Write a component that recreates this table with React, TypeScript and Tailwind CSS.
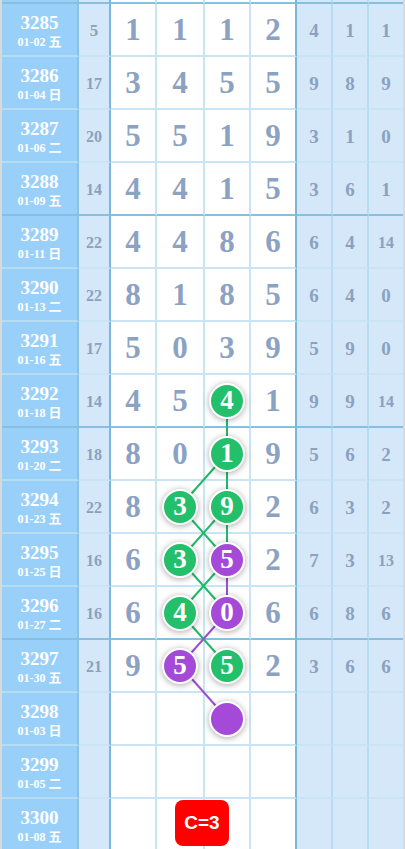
import React from "react";

type Ball = { v: string; c: "g" | "p" };
type Row = {
  n: string;
  d: string;
  s?: string;
  digits?: string[];
  r?: string[];
  balls?: Record<number, Ball>;
  badge?: boolean;
};

const rows: Row[] = [
  { n: "3285", d: "01-02 五", s: "5", digits: ["1", "1", "1", "2"], r: ["4", "1", "1"] },
  { n: "3286", d: "01-04 日", s: "17", digits: ["3", "4", "5", "5"], r: ["9", "8", "9"] },
  { n: "3287", d: "01-06 二", s: "20", digits: ["5", "5", "1", "9"], r: ["3", "1", "0"] },
  { n: "3288", d: "01-09 五", s: "14", digits: ["4", "4", "1", "5"], r: ["3", "6", "1"] },
  { n: "3289", d: "01-11 日", s: "22", digits: ["4", "4", "8", "6"], r: ["6", "4", "14"] },
  { n: "3290", d: "01-13 二", s: "22", digits: ["8", "1", "8", "5"], r: ["6", "4", "0"] },
  { n: "3291", d: "01-16 五", s: "17", digits: ["5", "0", "3", "9"], r: ["5", "9", "0"] },
  { n: "3292", d: "01-18 日", s: "14", digits: ["4", "5", "4", "1"], r: ["9", "9", "14"], balls: { 2: { v: "4", c: "g" } } },
  { n: "3293", d: "01-20 二", s: "18", digits: ["8", "0", "1", "9"], r: ["5", "6", "2"], balls: { 2: { v: "1", c: "g" } } },
  { n: "3294", d: "01-23 五", s: "22", digits: ["8", "3", "9", "2"], r: ["6", "3", "2"], balls: { 1: { v: "3", c: "g" }, 2: { v: "9", c: "g" } } },
  { n: "3295", d: "01-25 日", s: "16", digits: ["6", "3", "5", "2"], r: ["7", "3", "13"], balls: { 1: { v: "3", c: "g" }, 2: { v: "5", c: "p" } } },
  { n: "3296", d: "01-27 二", s: "16", digits: ["6", "4", "0", "6"], r: ["6", "8", "6"], balls: { 1: { v: "4", c: "g" }, 2: { v: "0", c: "p" } } },
  { n: "3297", d: "01-30 五", s: "21", digits: ["9", "5", "5", "2"], r: ["3", "6", "6"], balls: { 1: { v: "5", c: "p" }, 2: { v: "5", c: "g" } } },
  { n: "3298", d: "01-03 日", balls: { 2: { v: "", c: "p" } } },
  { n: "3299", d: "01-05 二" },
  { n: "3300", d: "01-08 五", badge: true },
];

const serif = { fontFamily: '"Liberation Serif", "Noto Sans CJK SC", serif' };

function BallView({ b }: { b: Ball }) {
  return (
    <div
      className={
        "relative z-10 flex h-[36px] w-[36px] items-center justify-center rounded-full border-2 border-white shadow-[0_1px_6px_rgba(0,0,0,0.35)] " +
        (b.c === "g" ? "bg-[#23bf6b]" : "bg-[#a54ad8]")
      }
    >
      <span className="text-[27px] font-bold leading-none text-white" style={serif}>
        {b.v}
      </span>
    </div>
  );
}

const digitWidths = ["w-[46px]", "w-[48px]", "w-[46px]", "w-[46px]"];
const rWidths = ["w-[36px]", "w-[36px]", "w-[34px]"];

function RowView({ row, idx }: { row: Row; idx: number }) {
  const thick = idx % 4 === 3;
  const hb = thick ? "border-b-[#86bfe0]" : "border-b-[#c9e4f2]";
  const hbBlue = thick ? "border-b-[#86bfe0]" : "border-b-[#b6dcf2]";
  const [md, wd] = row.d.split(" ");
  return (
    <div className="flex h-[53px]">
      <div
        className={"flex w-[77px] flex-col items-center border-b-2 border-r-2 border-r-[#86c3e4] bg-[#99d0fa] pt-[9px] text-white " + hbBlue}
        style={serif}
      >
        <div className="text-[19px] font-bold leading-[20px]">{row.n}</div>
        <div className="text-[12px] font-bold leading-[18px]">
          {md} <span className="text-[13px]">{wd}</span>
        </div>
      </div>
      <div
        className={"flex w-[32px] items-center justify-center border-b-2 border-r-2 border-r-[#7cb6da] bg-[#d5e8f9] pt-[2px] text-[#8aa1bf] " + hb}
        style={serif}
      >
        <span className={(row.s && row.s.length > 1 ? "text-[16px]" : "text-[17px]") + " font-bold"}>{row.s ?? ""}</span>
      </div>
      {digitWidths.map((w, i) => {
        const ball = row.balls?.[i];
        const last = i === 3;
        return (
          <div
            key={i}
            className={
              "relative flex items-center justify-center border-b-2 border-r-2 bg-white " +
              w +
              " " +
              hb +
              " " +
              (last ? "border-r-[#7ab6da]" : "border-r-[#c9e4f2]")
            }
          >
            {ball ? (
              <BallView b={ball} />
            ) : (
              <span className="text-[31px] font-bold leading-none text-[#8ba2c2]" style={serif}>
                {row.digits ? row.digits[i] : ""}
              </span>
            )}
            {row.badge && i === 1 && (
              <div
                className="absolute left-[18px] top-[1px] z-10 flex h-[46px] w-[54px] items-center justify-center rounded-[8px] bg-[#ff0000] text-[19px] font-bold text-white"
                style={{ fontFamily: '"Liberation Sans", Arial, sans-serif' }}
              >
                C=3
              </div>
            )}
          </div>
        );
      })}
      {rWidths.map((w, i) => {
        const v = row.r ? row.r[i] : "";
        return (
          <div
            key={i}
            className={
              "flex items-center justify-center border-b-2 bg-[#d5e8f9] pt-[3px] text-[#8aa1bf] " +
              w +
              " " +
              hb +
              " " +
              (i < 2 ? "border-r-2 border-r-[#b8dcef]" : "")
            }
            style={serif}
          >
            <span className={(v.length > 1 ? "text-[16px]" : "text-[19px]") + " font-bold"}>{v}</span>
          </div>
        );
      })}
    </div>
  );
}

const X = [0, 180, 227];
const cy = (i: number) => 4 + 53 * i + 25.5;

const green: [number, number, number, number][] = [
  [2, 7, 2, 8],
  [2, 8, 1, 9],
  [2, 8, 2, 9],
  [1, 9, 2, 10],
  [2, 9, 1, 10],
  [2, 9, 2, 10],
  [1, 10, 2, 11],
  [2, 10, 1, 11],
  [1, 11, 2, 12],
];
const purple: [number, number, number, number][] = [
  [2, 10, 2, 11],
  [2, 11, 1, 12],
  [1, 12, 2, 13],
];

export default function App() {
  return (
    <div className="relative h-[849px] w-[405px] overflow-hidden bg-[#d9d9d9] px-[2px]">
      <div className="flex flex-col">
        <div className="flex h-[4px]">
          <div className="w-[77px] border-b-2 border-r-2 border-b-[#86bfe0] border-r-[#86c3e4] bg-[#99d0fa]" />
          <div className="w-[32px] border-b-2 border-r-2 border-b-[#86bfe0] border-r-[#7cb6da] bg-[#d5e8f9]" />
          <div className="w-[46px] border-b-2 border-r-2 border-b-[#86bfe0] border-r-[#c9e4f2] bg-white" />
          <div className="w-[48px] border-b-2 border-r-2 border-b-[#86bfe0] border-r-[#c9e4f2] bg-white" />
          <div className="w-[46px] border-b-2 border-r-2 border-b-[#86bfe0] border-r-[#c9e4f2] bg-white" />
          <div className="w-[46px] border-b-2 border-r-2 border-b-[#86bfe0] border-r-[#7ab6da] bg-white" />
          <div className="w-[36px] border-b-2 border-r-2 border-b-[#86bfe0] border-r-[#b8dcef] bg-[#d5e8f9]" />
          <div className="w-[36px] border-b-2 border-r-2 border-b-[#86bfe0] border-r-[#b8dcef] bg-[#d5e8f9]" />
          <div className="w-[34px] border-b-2 border-b-[#86bfe0] bg-[#d5e8f9]" />
        </div>
        {rows.map((r, i) => (
          <RowView key={r.n} row={r} idx={i} />
        ))}
      </div>
      <svg className="pointer-events-none absolute left-0 top-0 z-[5]" width={405} height={849}>
        {green.map(([c1, r1, c2, r2], k) => (
          <line key={"g" + k} x1={X[c1]} y1={cy(r1)} x2={X[c2]} y2={cy(r2)} stroke="#22b868" strokeWidth={2} />
        ))}
        {purple.map(([c1, r1, c2, r2], k) => (
          <line key={"p" + k} x1={X[c1]} y1={cy(r1)} x2={X[c2]} y2={cy(r2)} stroke="#9a4fd2" strokeWidth={2} />
        ))}
      </svg>
    </div>
  );
}
